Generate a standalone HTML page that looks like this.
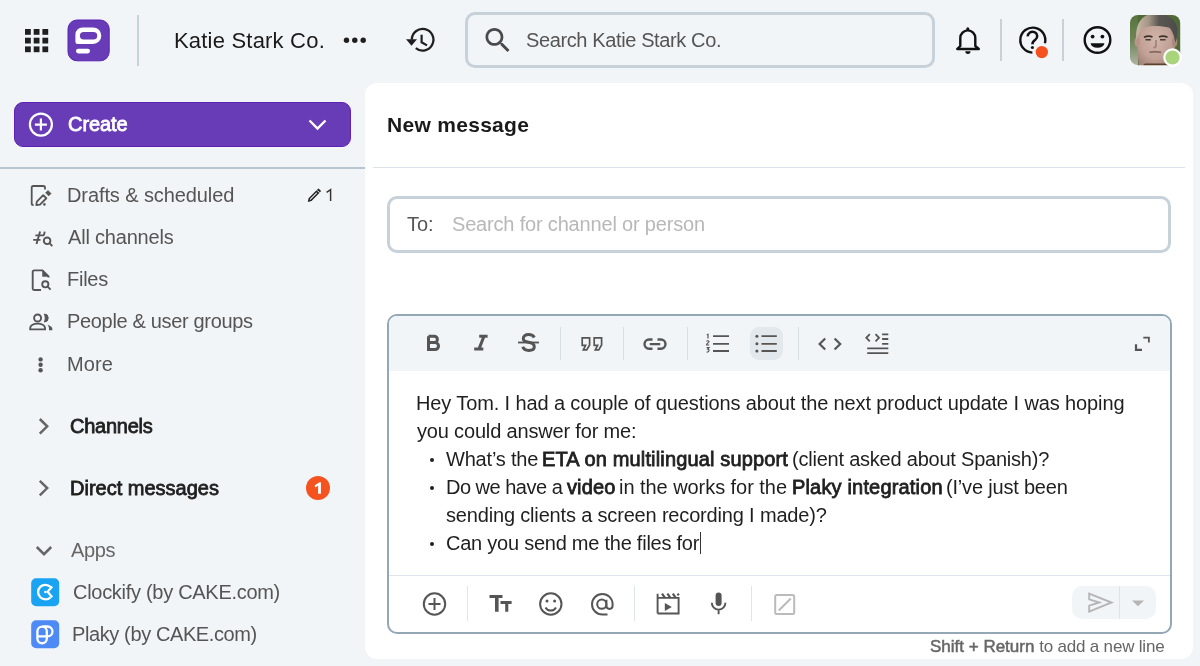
<!DOCTYPE html>
<html><head><meta charset="utf-8">
<style>
*{box-sizing:border-box;margin:0;padding:0}
html,body{width:1200px;height:666px;overflow:hidden;background:#f1f5f8;font-family:"Liberation Sans",sans-serif;color:#1f1f1f}
.a{position:absolute}
.t{position:absolute;white-space:nowrap;line-height:1;will-change:transform}
.r{font-size:20px;color:#1f1f1f}
.g{font-size:20px;color:#555}
.bd{font-weight:normal;-webkit-text-stroke:0.8px currentColor}
#ic{position:absolute;left:0;top:0}
</style></head><body>

<!-- top bar -->
<div class="a" style="left:137px;top:15px;width:2px;height:51px;background:#c8d1d8"></div>
<div class="t" id="ws" style="left:174px;top:30px;font-size:22px;color:#1a1a1a;letter-spacing:0.2px">Katie Stark Co.</div>

<!-- search -->
<div class="a" style="left:465px;top:12px;width:470px;height:56px;border:3px solid #c6d1d9;border-radius:10px"></div>
<div class="t" id="srch" style="left:526px;top:30px;font-size:20px;color:#555;letter-spacing:-0.38px">Search Katie Stark Co.</div>

<div class="a" style="left:1000px;top:19px;width:2px;height:42px;background:#c8d1d8"></div>
<div class="a" style="left:1062px;top:19px;width:2px;height:42px;background:#c8d1d8"></div>

<!-- create -->
<div class="a" style="left:14px;top:102px;width:337px;height:45px;border-radius:9px;background:#683cb7;border:1px solid #5c22b4"></div>
<div class="t bd" id="create" style="left:68px;top:114px;font-size:20px;color:#fff;letter-spacing:-0.06px">Create</div>
<div class="a" style="left:0;top:167px;width:366px;height:2px;background:#b8c3cb"></div>

<!-- sidebar items -->
<div class="t g" id="s1" style="left:67px;top:185px;letter-spacing:-0.1px">Drafts &amp; scheduled</div>
<div class="t g" id="s2" style="left:68px;top:227px;letter-spacing:-0.2px">All channels</div>
<div class="t g" id="s3" style="left:67px;top:269px;letter-spacing:-0.25px">Files</div>
<div class="t g" id="s4" style="left:67px;top:311px;letter-spacing:-0.33px">People &amp; user groups</div>
<div class="t g" id="s5" style="left:67px;top:354px;letter-spacing:0.1px">More</div>
<div class="t r bd" id="s6" style="left:70px;top:416px;letter-spacing:-0.24px">Channels</div>
<div class="t r bd" id="s7" style="left:70px;top:478px;letter-spacing:0px">Direct messages</div>
<div class="a" style="left:305.5px;top:476px;width:24px;height:24px;border-radius:50%;background:#f4521e"></div>
<div class="t" id="s8" style="left:71px;top:540px;font-size:20px;color:#666;letter-spacing:-0.33px">Apps</div>
<div class="t g" id="s9" style="left:73px;top:582px;letter-spacing:-0.29px">Clockify (by CAKE.com)</div>
<div class="t g" id="s10" style="left:72px;top:624px;letter-spacing:-0.39px">Plaky (by CAKE.com)</div>

<!-- main panel -->
<div class="a" style="left:365px;top:83px;width:828px;height:576px;background:#fff;border-radius:12px"></div>
<div class="t" id="nm" style="left:387px;top:114px;font-size:21px;color:#1a1a1a;font-weight:bold;letter-spacing:0.3px">New message</div>
<div class="a" style="left:373px;top:167px;width:812px;height:1px;background:#dde3e8"></div>

<div class="a" style="left:387px;top:196px;width:784px;height:57px;border:3px solid #c6d1d9;border-radius:10px"></div>
<div class="t g" id="to" style="left:407px;top:214px">To:</div>
<div class="t" id="ph" style="left:452px;top:214px;font-size:20px;color:#b8b8b8;letter-spacing:-0.18px">Search for channel or person</div>

<!-- editor -->
<div class="a" style="left:387px;top:314px;width:785px;height:319.5px;border:2px solid #93a7b4;border-radius:10px;overflow:hidden">
  <div class="a" style="left:0;top:0;width:100%;height:55px;background:#f1f5f8"></div>
  <div class="a" style="left:0;top:259px;width:100%;height:1px;background:#dfe5ea"></div>
</div>
<div class="a" style="left:750px;top:327px;width:33px;height:33px;border-radius:9px;background:#e3e8ec"></div>
<div class="a" style="left:560px;top:327px;width:1px;height:33px;background:#d8dee3"></div>
<div class="a" style="left:623px;top:327px;width:1px;height:33px;background:#d8dee3"></div>
<div class="a" style="left:687px;top:327px;width:1px;height:33px;background:#d8dee3"></div>
<div class="a" style="left:798px;top:327px;width:1px;height:33px;background:#d8dee3"></div>

<div class="a" style="left:467px;top:586px;width:1px;height:35px;background:#dfe5ea"></div>
<div class="a" style="left:634px;top:586px;width:1px;height:35px;background:#dfe5ea"></div>
<div class="a" style="left:751px;top:586px;width:1px;height:35px;background:#dfe5ea"></div>
<div class="a" style="left:1072px;top:586px;width:84px;height:33px;border-radius:10px;background:#f1f5f8"></div>
<div class="a" style="left:1119px;top:586px;width:1px;height:33px;background:#dde3e8"></div>

<!-- message -->
<div class="t r" id="m1" style="left:416px;top:393px;letter-spacing:-0.12px">Hey Tom. I had a couple of questions about the next product update I was hoping</div>
<div class="t r" id="m2" style="left:417px;top:421px;letter-spacing:-0.17px">you could answer for me:</div>
<div class="a" style="left:430px;top:458px;width:4px;height:4px;border-radius:50%;background:#1f1f1f"></div>
<div class="a" style="left:430px;top:486px;width:4px;height:4px;border-radius:50%;background:#1f1f1f"></div>
<div class="a" style="left:430px;top:542px;width:4px;height:4px;border-radius:50%;background:#1f1f1f"></div>
<div class="t r" id="m3a" style="left:446px;top:449px;letter-spacing:-0.2px">What’s the</div>
<div class="t r bd" id="m3b" style="left:542px;top:449px;letter-spacing:0.15px">ETA on multilingual support</div>
<div class="t r" id="m3c" style="left:792px;top:449px;letter-spacing:-0.22px">(client asked about Spanish)?</div>
<div class="t r" id="m4a" style="left:446px;top:477px;letter-spacing:-0.5px">Do we have a</div>
<div class="t r bd" id="m4b" style="left:567px;top:477px;letter-spacing:0.12px">video</div>
<div class="t r" id="m4c" style="left:619px;top:477px;letter-spacing:-0.05px">in the works for the</div>
<div class="t r bd" id="m4d" style="left:792px;top:477px;letter-spacing:0.17px">Plaky integration</div>
<div class="t r" id="m4e" style="left:946px;top:477px;letter-spacing:-0.19px">(I’ve just been</div>
<div class="t r" id="m5" style="left:446px;top:505px;letter-spacing:-0.17px">sending clients a screen recording I made)?</div>
<div class="t r" id="m6" style="left:446px;top:533px;letter-spacing:-0.24px">Can you send me the files for</div>
<div class="a" style="left:700px;top:532px;width:1px;height:22px;background:#333"></div>

<div class="t" id="shift" style="left:930px;top:638px;font-size:17px;color:#666"><span style="letter-spacing:0px;-webkit-text-stroke:0.5px currentColor">Shift + Return</span> <span style="letter-spacing:-0.19px">to add a new line</span></div>

<svg id="ic" width="1200" height="666" viewBox="0 0 1200 666">
<!-- grid -->
<g fill="#1f1f1f">
<rect x="25" y="29" width="5.8" height="5.8"/><rect x="33.7" y="29" width="5.8" height="5.8"/><rect x="42.4" y="29" width="5.8" height="5.8"/>
<rect x="25" y="37.7" width="5.8" height="5.8"/><rect x="33.7" y="37.7" width="5.8" height="5.8"/><rect x="42.4" y="37.7" width="5.8" height="5.8"/>
<rect x="25" y="46.4" width="5.8" height="5.8"/><rect x="33.7" y="46.4" width="5.8" height="5.8"/><rect x="42.4" y="46.4" width="5.8" height="5.8"/>
</g>
<!-- logo -->
<rect x="68" y="20" width="41.2" height="40.8" rx="9" fill="#683cb7" stroke="#5a22b2" stroke-width="1"/>
<path d="M82.4,27.4 H93.05 A8.25,8.25 0 0 1 93.05,43.9 H77.9 A2.5,2.5 0 0 1 75.4,41.4 V34.4 A7,7 0 0 1 82.4,27.4 Z M83.65,31.9 A3.75,3.75 0 0 0 83.65,39.4 H93.45 A3.75,3.75 0 0 0 93.45,31.9 Z" fill="#fff" fill-rule="evenodd"/>
<rect x="76" y="48.8" width="14" height="4.6" rx="2.3" fill="#fff"/>
<!-- dots -->
<g fill="#1f1f1f"><circle cx="346.5" cy="40.2" r="2.7"/><circle cx="354.8" cy="40.2" r="2.7"/><circle cx="363.2" cy="40.2" r="2.7"/></g>
<!-- history -->
<path d="M411.8,39.7 A10.8,10.8 0 1 1 415.8,48.1" fill="none" stroke="#1f1f1f" stroke-width="2.3"/>
<path d="M406,39.2 H417 L411.5,45.8 Z" fill="#1f1f1f"/>
<path d="M421.6,34.8 V42.3 L427,45.4" fill="none" stroke="#1f1f1f" stroke-width="2.2"/>
<!-- search icon -->
<path transform="translate(481.4,23.9) scale(1.372)" fill="#4a4a4a" d="M15.5 14h-.79l-.28-.27C15.41 12.59 16 11.11 16 9.5 16 5.91 13.09 3 9.5 3S3 5.91 3 9.5 5.91 16 9.5 16c1.61 0 3.09-.59 4.230-1.57l.27.28v.79l5 4.99L20.49 19l-4.99-5zm-6 0C7.01 14 5 11.99 5 9.5S7.01 5 9.5 5 14 7.010 14 9.5 11.99 14 9.5 14z"/>
<!-- bell -->
<path d="M957.2,49 H978.8 L975.3,46 V38 A7.5,7.6 0 0 0 960.3,38 V46 Z" fill="none" stroke="#111" stroke-width="2.4" stroke-linejoin="round"/>
<rect x="966.3" y="27.2" width="3" height="3.5" rx="1.5" fill="#111"/>
<path d="M965.3,51.3 H970.5 A2.6,2.6 0 0 1 965.3,51.3 Z" fill="#111"/>
<!-- help -->
<path d="M1032.4,52.6 A12.5,12.5 0 1 1 1044.9,43.3" fill="none" stroke="#111" stroke-width="2.4"/>
<path d="M1027.8,36.4 A4.7,4.5 0 1 1 1035.3,39.8 C1033.2,41.2 1032.4,42 1032.4,44.3" fill="none" stroke="#111" stroke-width="2.5"/>
<circle cx="1032.4" cy="47.5" r="1.55" fill="#111"/>
<circle cx="1041.8" cy="52.1" r="6.2" fill="#f4511e"/>
<!-- smiley -->
<circle cx="1097.5" cy="40" r="12.8" fill="none" stroke="#111" stroke-width="2.4"/>
<circle cx="1092.6" cy="36.6" r="1.9" fill="#111"/><circle cx="1102.4" cy="36.6" r="1.9" fill="#111"/>
<path d="M1090.6,43.3 H1104.4 A6.9,4.4 0 0 1 1090.6,43.3 Z" fill="#111"/>

<!-- create icons -->
<circle cx="40.9" cy="124.6" r="11" fill="none" stroke="#fff" stroke-width="2.2"/>
<path d="M40.9,118.6 V130.6 M34.9,124.6 H46.9" stroke="#fff" stroke-width="2.2"/>
<path d="M309.5,120.5 L317.5,128.5 L325.5,120.5" fill="none" stroke="#fff" stroke-width="2.4"/>

<!-- sidebar icons -->
<g fill="none" stroke="#555" stroke-width="2">
<path d="M33.6,205 H33.3 A1.6,1.6 0 0 1 31.7,203.4 V187.6 A1.6,1.6 0 0 1 33.3,186 H43.4 A1.6,1.6 0 0 1 45,187.6 V189.6" stroke-width="1.8"/>
<path d="M36.3,205.2 L36.84,201.54 L43.24,195.14 L46.36,198.26 L39.96,204.66 Z" stroke-width="1.8" stroke-linejoin="round"/>
<path d="M45.57,192.81 L47.98,190.4 L51.1,193.52 L48.69,195.93 Z" fill="#555" stroke-width="0.6"/>
<circle cx="44.4" cy="204.4" r="1.1" fill="#555" stroke-width="0.5"/>
<!-- pencil count -->
<path d="M308.8,201 L309.3,198.5 L316.5,191.3 L318.3,193.1 L311.1,200.3 Z" stroke="#222" stroke-width="1.5"/>
<path d="M317.5,190.3 L318.5,189.5 L320,191 L319.2,192" stroke="#222" stroke-width="1.6"/>
<path d="M326.6,192.3 L330.6,189.6 V201.1" stroke="#333" stroke-width="1.45" stroke-linejoin="miter"/>
<!-- all channels -->
<path d="M40.1,231.6 L36.5,243.9 M44.7,231.6 L43.9,235.4 M35.4,235.4 H44 M33.2,239.9 H40.5" stroke-width="1.9"/>
<circle cx="47.1" cy="240.8" r="3.3" stroke-width="1.9"/>
<path d="M49.5,243.2 L52.3,246.1" stroke-width="1.9"/>
<!-- files -->
<path d="M41,290 H34.2 A1.5,1.5 0 0 1 32.7,288.5 V271.5 A1.5,1.5 0 0 1 34.2,270.4 H42.5 L48.5,276.4 V277.5" stroke-width="1.9"/>
<path d="M42.5,270.4 V276.4 H48.5 Z" fill="#555" stroke-width="0.5"/>
<circle cx="45.3" cy="284.3" r="3.1" stroke-width="1.9"/>
<path d="M47.6,286.6 L50.6,289.6" stroke-width="1.9"/>
<!-- people -->
<circle cx="37.6" cy="318" r="3.5" stroke-width="1.9"/>
<path d="M30.2,329.4 V328 C30.2,325.3 33.8,323.6 37.6,323.6 C41.4,323.6 45,325.3 45,328 V329.4 Z" stroke-width="1.9"/>
<path d="M44.2,314 A4,4 0 0 1 44.2,322 C45.6,320 45.6,316 44.2,314 Z" fill="#555" stroke-width="1"/>
<path d="M47.5,324.8 C50.3,325.6 52.3,327 52.3,328.8 V330.3 H49 V328.8 C49,327.3 48.5,326 47.5,324.8 Z" fill="#555" stroke-width="0"/>
<!-- chevrons -->
<path d="M39.8,419 L47.2,426.3 L39.8,433.6" stroke="#666" stroke-width="2.5"/>
<path d="M39.8,480.8 L47.2,488.1 L39.8,495.4" stroke="#666" stroke-width="2.5"/>
<path d="M36.8,547 L44,554.2 L51.2,547" stroke="#666" stroke-width="2.5"/>
</g>
<g fill="#555"><circle cx="40.6" cy="359.4" r="2.2"/><circle cx="40.6" cy="364.8" r="2.2"/><circle cx="40.6" cy="370.2" r="2.2"/></g>

<path d="M314.6,485.6 L319.4,482.2 H320.9 V493.8 H318.1 V485.6 L315.4,487.6 Z" fill="#fff"/>
<!-- apps -->
<rect x="31.2" y="578.2" width="28" height="28" rx="5" fill="#1aa3f3"/>
<path d="M50.6,587 A7.3,7.3 0 1 0 50.6,597.2" fill="none" stroke="#fff" stroke-width="2.3"/>
<path d="M52.2,586.5 L47.6,591.8 L52.2,597.3" fill="none" stroke="#fff" stroke-width="2.2"/>
<circle cx="45.4" cy="592" r="1.3" fill="#fff"/>
<rect x="31.2" y="620.2" width="28" height="28" rx="5" fill="#4d8af6"/>
<path d="M37.4,636.3 V631.3 A4.7,4.7 0 0 1 46.8,631.3 V638.6 A4.7,4.7 0 0 1 37.4,638.6 Z M37.4,636.3 H47.6 A4.9,4.9 0 0 0 47.6,626.5 H42.1" fill="none" stroke="#fff" stroke-width="2.3"/>

<!-- toolbar icons -->
<g fill="none" stroke="#555" stroke-width="2.4">
<path d="M428.5,336.2 H434.2 A3.2,3.2 0 0 1 434.2,342.6 H428.5 M428.5,342.6 H435 A3.5,3.5 0 0 1 435,349.6 H428.5 Z M428.5,336.2 V349.6" stroke-width="3"/>
<path d="M479.2,336.3 H487.6 M474.2,348.9 H483.3 M484,336.3 L479,348.9" stroke-width="3"/>
<path d="M518,342.5 H539" stroke-width="1.8"/>
<path d="M534.3,337.5 C533.3,335.5 531.5,334.6 528.6,334.6 C525.3,334.6 523.3,336.3 523.3,338.6 C523.3,340.8 525,341.8 528.4,342.3 C532.2,342.9 534.3,344.2 534.3,346.7 C534.3,349 532.3,350.4 528.8,350.4 C525.6,350.4 523.5,349.1 522.8,346.8" stroke-width="3"/>
<path d="M652.5,339.5 H649.1 A4.6,4.6 0 0 0 649.1,348.7 H652.5 M657.5,339.5 H660.9 A4.6,4.6 0 0 1 660.9,348.7 H657.5 M649.8,344.1 H660.2"/>
<path d="M713,336.2 H729 M713,343.8 H729 M713,351 H729" stroke-width="1.8"/>
<path d="M761.5,336.2 H776.8 M761.5,343.8 H776.8 M761.5,351 H776.8" stroke-width="1.8"/>
<path d="M825.2,338.5 L819.6,344 L825.2,349.5 M834.6,338.5 L840.2,344 L834.6,349.5" stroke-width="2.2"/>
<path d="M869.8,334.2 L866.3,337.8 L869.8,341.4 M875.5,334.2 L879,337.8 L875.5,341.4 M882.1,334.3 H888.3 M882.1,339 H888.3 M882.1,343.8 H888.3 M867.2,348.3 H888.3 M867.2,353.1 H888.3" stroke-width="1.8"/>
<path d="M1136,344.2 V349.9 H1142" stroke-width="2.2"/><path d="M1143.3,337.6 H1148.9 V342.6" stroke-width="1.8"/>
</g>
<g fill="#555"><circle cx="756.9" cy="336.2" r="1.5"/><circle cx="756.9" cy="343.8" r="1.5"/><circle cx="756.9" cy="351" r="1.5"/></g>
<path d="M582.2,337.8 H589.6 V345 L586.7,349.9 H583.3 L585.6,345.4 H582.2 Z M594.2,337.8 H601.6 V345 L598.7,349.9 H595.3 L597.6,345.4 H594.2 Z" fill="none" stroke="#555" stroke-width="1.7" stroke-linejoin="miter"/>
<g fill="none" stroke="#555" stroke-width="1.2"><path d="M706.8,334.8 L708,334.3 V338.6 M706.5,341.4 C706.8,340.5 709,340.5 709,341.6 C709,342.6 706.5,343.4 706.5,345 H709.2 M706.6,347.6 H709 L707.8,349.2 C709.6,349.2 709.6,352.4 706.6,352"/></g>

<!-- bottom toolbar -->
<g fill="none" stroke="#555" stroke-width="2">
<circle cx="434.5" cy="604" r="10.7"/>
<path d="M434.5,598 V610 M428.5,604 H440.5"/>
<circle cx="550.8" cy="604" r="10.7"/>
<path d="M545.5,607.5 A6,6 0 0 0 556,607.5"/>
<path d="M607.5,614.5 H602.3 A10.3,10.3 0 0 1 602.3,593.9 A10.3,10.3 0 0 1 612.6,604.2 V605.8 A3.1,3.1 0 0 1 606.4,605.8 V599.8"/><circle cx="601.8" cy="604.2" r="4.6"/>
<path d="M657.6,613.5 V593.8 M657.6,597.9 H678.6 V613.5 H657.6" stroke-width="1.9"/><path d="M662,593.6 L665,597.8 M667.4,593.6 L670.4,597.8 M672.8,593.6 L675.8,597.8 M677.6,593.6 L678.8,595.3" stroke-width="2.2"/>
<path d="M711.8,602.8 A6.8,6.8 0 0 0 725.4,602.8 M718.6,609.6 V614.3" stroke-width="1.9"/>
</g>
<g fill="#555">
<path d="M489.5,595 H502.5 V598 H498.6 V611.8 H495 V598 H489.5 Z M500.5,601 H511.6 V604 H508.3 V611.8 H505.2 V604 H500.5 Z"/>
<circle cx="547" cy="601" r="1.5"/><circle cx="554.6" cy="601" r="1.5"/>
<path d="M664.8,603 L671.8,607 L664.8,611 Z"/>
<rect x="715.6" y="592.6" width="6" height="13.4" rx="3"/>
</g>
<g fill="none" stroke="#bbb" stroke-width="2">
<rect x="775.2" y="595" width="19" height="19" rx="1.5"/>
<path d="M778.8,610.5 L790.8,598.5"/>
</g>
<path d="M1089.2,593.6 L1111.5,602.5 L1089.2,611.6 V605.6 L1099.3,602.5 L1089.2,599.4 Z" fill="none" stroke="#b5b5b5" stroke-width="1.9" stroke-linejoin="miter"/>
<path d="M1132,600.5 H1144 L1138,606.2 Z" fill="#b5b5b5"/>

<!-- avatar -->
<defs>
<clipPath id="av"><rect x="1130" y="15" width="50.2" height="50.2" rx="8"/></clipPath>
<linearGradient id="bgl" x1="0" y1="0" x2="0" y2="1"><stop offset="0" stop-color="#56733c"/><stop offset="0.5" stop-color="#6f8558"/><stop offset="1" stop-color="#b3b6aa"/></linearGradient>
<radialGradient id="face" cx="0.48" cy="0.42" r="0.62"><stop offset="0" stop-color="#d2b5aa"/><stop offset="0.65" stop-color="#c1a196"/><stop offset="1" stop-color="#a58479"/></radialGradient>
<linearGradient id="hair" x1="0" y1="0" x2="1" y2="0"><stop offset="0" stop-color="#cbb7a4"/><stop offset="0.3" stop-color="#a39587"/><stop offset="0.55" stop-color="#5a5653"/><stop offset="1" stop-color="#4e4c4b"/></linearGradient>
<filter id="soft" x="-5%" y="-5%" width="110%" height="110%"><feGaussianBlur stdDeviation="0.45"/></filter>
</defs>
<g clip-path="url(#av)">
<g filter="url(#soft)">
<rect x="1129" y="14" width="53" height="53" fill="#4f6b36"/>
<rect x="1129" y="14" width="9" height="53" fill="url(#bgl)"/>
<path d="M1139,67 C1138,56 1136.5,46 1137.5,35 C1139,25 1147,21 1156,21 C1166,21 1174,25 1175,36 C1176,47 1173.5,57 1171,67 Z" fill="url(#face)"/>
<ellipse cx="1137.3" cy="42" rx="2.8" ry="4.8" fill="#b89488"/>
<ellipse cx="1174.6" cy="42" rx="2.6" ry="4.8" fill="#a98a80"/>
<path d="M1136.5,40 C1135,25 1141,15 1152,14 C1163,13 1173,16 1177,26 C1178,32 1177,38 1175.5,43 C1174,35 1172,30 1169,27.5 C1161,25.5 1150,25 1143,28 C1140,31 1138,35 1136.5,40 Z" fill="url(#hair)"/>
<path d="M1144,37.3 C1147,35.8 1150,35.8 1152.5,37 M1159,37 C1161.5,35.8 1164.5,35.8 1167.5,37.3" stroke="#3e302c" stroke-width="1.8" fill="none"/>
<path d="M1145.5,39.8 H1150.8 M1160,39.8 H1165.5" stroke="#4a3a36" stroke-width="1.5"/>
<path d="M1156,40 V46.5 L1153.5,48" stroke="#a08076" stroke-width="1.6" fill="none"/>
<path d="M1149.5,52.3 C1153,51.6 1157,51.6 1161,52.3" stroke="#7e6058" stroke-width="1.5" fill="none"/>
<path d="M1141,67 L1145,63.5 H1167 L1170,67 Z" fill="#5d4028"/>
</g>
</g>
<circle cx="1172.5" cy="57.5" r="9.3" fill="#fff"/>
<circle cx="1172.5" cy="57.5" r="7.1" fill="#a9d47c"/>
</svg>

</body></html>
